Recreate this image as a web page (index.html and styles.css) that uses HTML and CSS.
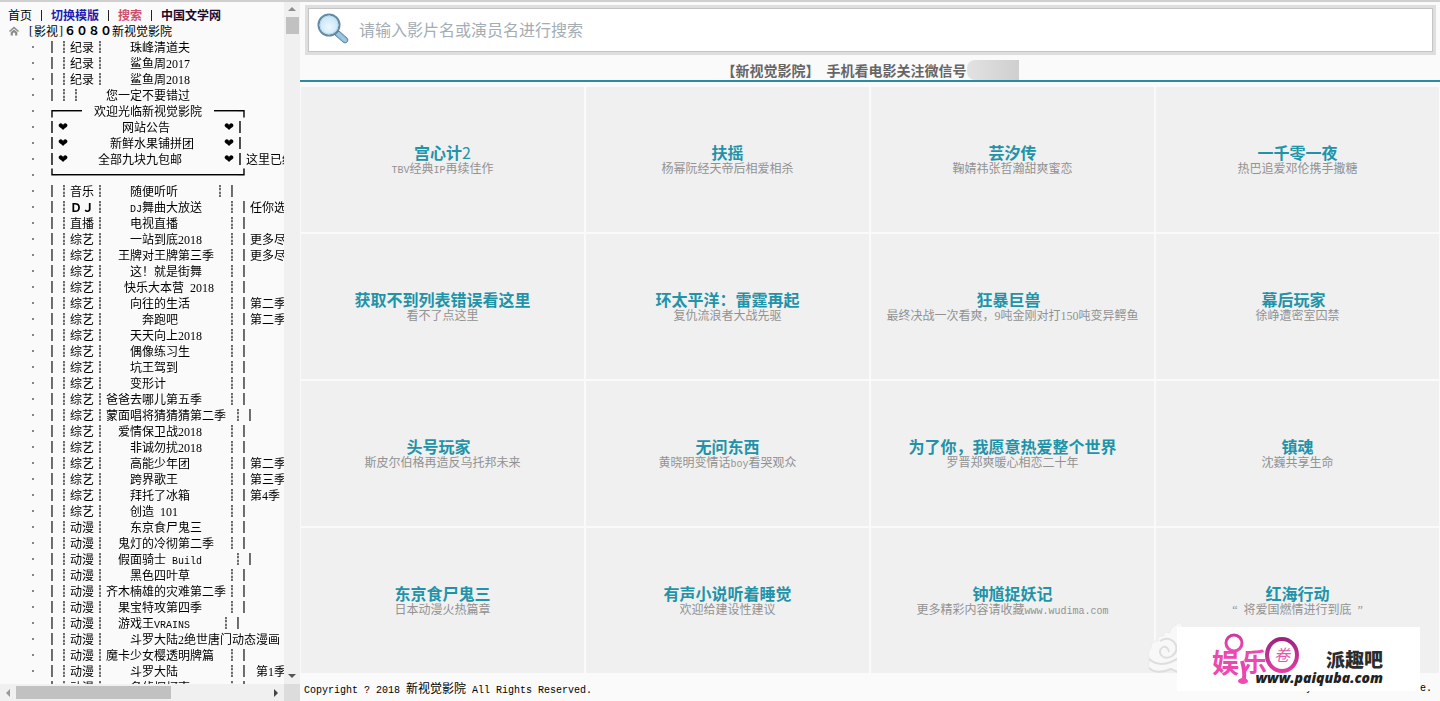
FILE: index.html
```html
<!DOCTYPE html>
<html lang="zh-CN">
<head>
<meta charset="utf-8">
<title>新视觉影院</title>
<link rel="stylesheet" href="styles.css">
</head>
<body>
<aside class="sidebar">
  <div class="pane">
    <nav class="topnav"><a class="home" href="#">首页</a><span class="sep"></span><a class="switch" href="#">切换模版</a><span class="sep"></span><a class="find" href="#">搜索</a><span class="sep"></span><a class="lit" href="#">中国文学网</a></nav>
    <a class="root" href="#"><svg class="house" viewBox="0 0 10 10" width="10" height="10"><path d="M5 .5 0 5l1 .9L5 2.400l4 3.500 1-.9zM5 3.400 1.700 6.300V9.500h2.200V6.700h2.200v2.800h2.200V6.300z"/></svg><span class="bracket">[</span>影视<span class="bracket">]</span><b>６０８０</b>新视觉影院</a>
    <ul class="tree">
      <li><a href="#"><i>│┊</i>纪录<i>┊</i>　　珠峰清道夫</a></li>
      <li><a href="#"><i>│┊</i>纪录<i>┊</i>　　鲨鱼周<span class="n">2017</span></a></li>
      <li><a href="#"><i>│┊</i>纪录<i>┊</i>　　鲨鱼周<span class="n">2018</span></a></li>
      <li><a href="#"><i>│┊┊</i>　　您一定不要错过</a></li>
      <li><a href="#">┏━━　欢迎光临新视觉影院　━━┓</a></li>
      <li><a href="#">┃<span class="heart">❤</span>　　　　网站公告　　　　<span class="heart">❤</span>┃</a></li>
      <li><a href="#">┃<span class="heart">❤</span>　　　新鲜水果铺拼团　　<span class="heart">❤</span>┃</a></li>
      <li><a href="#">┃<span class="heart">❤</span>　　全部九块九包邮　　　<span class="heart">❤</span>┃这里已经</a></li>
      <li><a href="#">┗━━━━━━━━━━━━━━━┛</a></li>
      <li><a href="#"><i>│┊</i>音乐<i>┊</i>　　随便听听　　　<i>┊│</i></a></li>
      <li><a href="#"><i>│┊</i><b>ＤＪ</b><i>┊</i>　　<span class="m">DJ</span>舞曲大放送　　<i>┊│</i>任你选</a></li>
      <li><a href="#"><i>│┊</i>直播<i>┊</i>　　电视直播　　　　<i>┊│</i></a></li>
      <li><a href="#"><i>│┊</i>综艺<i>┊</i>　　一站到底<span class="n">2018</span>　　<i>┊│</i>更多尽</a></li>
      <li><a href="#"><i>│┊</i>综艺<i>┊</i>　王牌对王牌第三季　<i>┊│</i>更多尽</a></li>
      <li><a href="#"><i>│┊</i>综艺<i>┊</i>　　这！就是街舞　　<i>┊│</i></a></li>
      <li><a href="#"><i>│┊</i>综艺<i>┊</i>　&#8194;快乐大本营&#8194;<span class="n">2018</span>　<i>┊│</i></a></li>
      <li><a href="#"><i>│┊</i>综艺<i>┊</i>　　向往的生活　　　<i>┊│</i>第二季</a></li>
      <li><a href="#"><i>│┊</i>综艺<i>┊</i>　　　奔跑吧　　　　<i>┊│</i>第二季</a></li>
      <li><a href="#"><i>│┊</i>综艺<i>┊</i>　　天天向上<span class="n">2018</span>　　<i>┊│</i></a></li>
      <li><a href="#"><i>│┊</i>综艺<i>┊</i>　　偶像练习生　　　<i>┊│</i></a></li>
      <li><a href="#"><i>│┊</i>综艺<i>┊</i>　　坑王驾到　　　　<i>┊│</i></a></li>
      <li><a href="#"><i>│┊</i>综艺<i>┊</i>　　变形计　　　　　<i>┊│</i></a></li>
      <li><a href="#"><i>│┊</i>综艺<i>┊</i>爸爸去哪儿第五季　　<i>┊│</i></a></li>
      <li><a href="#"><i>│┊</i>综艺<i>┊</i>蒙面唱将猜猜猜第二季&#8194;<i>┊│</i></a></li>
      <li><a href="#"><i>│┊</i>综艺<i>┊</i>　爱情保卫战<span class="n">2018</span>　　<i>┊│</i></a></li>
      <li><a href="#"><i>│┊</i>综艺<i>┊</i>　　非诚勿扰<span class="n">2018</span>　　<i>┊│</i></a></li>
      <li><a href="#"><i>│┊</i>综艺<i>┊</i>　　高能少年团　　　<i>┊│</i>第二季</a></li>
      <li><a href="#"><i>│┊</i>综艺<i>┊</i>　　跨界歌王　　　　<i>┊│</i>第三季</a></li>
      <li><a href="#"><i>│┊</i>综艺<i>┊</i>　　拜托了冰箱　　　<i>┊│</i>第<span class="n">4</span>季</a></li>
      <li><a href="#"><i>│┊</i>综艺<i>┊</i>　　创造&#8194;<span class="n">101</span>　　　　<i>┊│</i></a></li>
      <li><a href="#"><i>│┊</i>动漫<i>┊</i>　　东京食尸鬼三　　<i>┊│</i></a></li>
      <li><a href="#"><i>│┊</i>动漫<i>┊</i>　鬼灯的冷彻第二季　<i>┊│</i></a></li>
      <li><a href="#"><i>│┊</i>动漫<i>┊</i>　假面骑士&#8194;<span class="m">Build</span>　　&#8194;<i>┊│</i></a></li>
      <li><a href="#"><i>│┊</i>动漫<i>┊</i>　　黑色四叶草　　　<i>┊│</i></a></li>
      <li><a href="#"><i>│┊</i>动漫<i>┊</i>齐木楠雄的灾难第二季<i>┊│</i></a></li>
      <li><a href="#"><i>│┊</i>动漫<i>┊</i>　果宝特攻第四季　　<i>┊│</i></a></li>
      <li><a href="#"><i>│┊</i>动漫<i>┊</i>　游戏王<span class="m">VRAINS</span>　　&#8194;<i>┊│</i></a></li>
      <li><a href="#"><i>│┊</i>动漫<i>┊</i>　　斗罗大陆<span class="n">2</span>绝世唐门动态漫画</a></li>
      <li><a href="#"><i>│┊</i>动漫<i>┊</i>魔卡少女樱透明牌篇　<i>┊│</i></a></li>
      <li><a href="#"><i>│┊</i>动漫<i>┊</i>　　斗罗大陆　　　　<i>┊│</i>&#8194;第<span class="n">1</span>季</a></li>
      <li><a href="#"><i>│┊</i>动漫<i>┊</i>　　名侦探柯南　　　<i>┊│</i></a></li>
    </ul>
  </div>
  <div class="vbar"><span class="arrow up"></span><span class="vthumb"></span><span class="arrow down"></span></div>
  <div class="hbar"><span class="arrow left"></span><span class="hthumb"></span><span class="arrow right"></span></div>
  <div class="corner"></div>
</aside>
<main class="main">
  <form class="search">
    <label class="field">
      <svg viewBox="0 0 32 32" width="32" height="32" aria-hidden="true">
        <defs>
          <radialGradient id="glass" cx=".5" cy=".6" r=".6"><stop offset="0" stop-color="#edf8fe"/><stop offset="1" stop-color="#c3e2f4"/></radialGradient>
          <linearGradient id="handle" x1="0" y1="1" x2="1" y2="0"><stop offset="0" stop-color="#4d7fa3"/><stop offset=".5" stop-color="#a3cce6"/><stop offset="1" stop-color="#4f7f9f"/></linearGradient>
        </defs>
        <path d="M18 22 22 18 30 25Q32 27 30 29 28 31 26 29z" fill="url(#handle)" stroke="#5886a5"/>
        <circle cx="12" cy="12" r="10.500" fill="url(#glass)" stroke="#6289a6" stroke-width="2"/>
        <circle cx="12" cy="12" r="9" fill="none" stroke="#b9d6e8"/>
      </svg>
      <input type="text" aria-label="搜索" placeholder="请输入影片名或演员名进行搜索">
    </label>
  </form>
  <h1 class="notice"><span>【新视觉影院】</span><span>手机看电影关注微信号</span><span class="mask"></span></h1>
  <section class="grid">
    <a class="cell" href="#"><strong>宫心计<span class="d">2</span></strong><small><span class="m">TBV</span>经典<span class="m">IP</span>再续佳作</small></a>
    <a class="cell" href="#"><strong>扶摇</strong><small>杨幂阮经天帝后相爱相杀</small></a>
    <a class="cell" href="#"><strong>芸汐传</strong><small>鞠婧祎张哲瀚甜爽蜜恋</small></a>
    <a class="cell" href="#"><strong>一千零一夜</strong><small>热巴追爱邓伦携手撒糖</small></a>
    <a class="cell" href="#"><strong>获取不到列表错误看这里</strong><small>看不了点这里</small></a>
    <a class="cell" href="#"><strong>环太平洋：雷霆再起</strong><small>复仇流浪者大战先驱</small></a>
    <a class="cell" href="#"><strong>狂暴巨兽&#8194;</strong><small>最终决战一次看爽，<span class="n">9</span>吨金刚对打<span class="n">150</span>吨变异鳄鱼</small></a>
    <a class="cell" href="#"><strong>幕后玩家&#8194;</strong><small>徐峥遭密室囚禁</small></a>
    <a class="cell" href="#"><strong>头号玩家&#8194;</strong><small>斯皮尔伯格再造反乌托邦未来</small></a>
    <a class="cell" href="#"><strong>无问东西</strong><small>黄晓明变情话<span class="m">boy</span>看哭观众</small></a>
    <a class="cell" href="#"><strong>为了你，我愿意热爱整个世界</strong><small>罗晋郑爽暖心相恋二十年</small></a>
    <a class="cell" href="#"><strong>镇魂</strong><small>沈巍共享生命</small></a>
    <a class="cell" href="#"><strong>东京食尸鬼三</strong><small>日本动漫火热篇章</small></a>
    <a class="cell" href="#"><strong>有声小说听着睡觉</strong><small>欢迎给建设性建议</small></a>
    <a class="cell" href="#"><strong>钟馗捉妖记</strong><small>更多精彩内容请收藏<span class="m">www.wudima.com</span></small></a>
    <a class="cell" href="#"><strong>红海行动</strong><small><span class="n">“</span>&#8194;将爱国燃情进行到底&#8194;<span class="n">”</span></small></a>
  </section>
  <footer class="footer"><span><span class="m">Copyright ? 2018 </span>新视觉影院<span class="m"> All Rights Reserved.</span></span><span class="m">Powered by New Vision Theatre.</span></footer>
</main>
<div class="badge">
  <svg class="cloud" viewBox="0 0 40 56" width="40" height="56" aria-hidden="true">
    <path d="M34 1Q22 8 24 12 17 9 18 15 10 14 12 20 4 20 5 27 0 32 4 38 0 46 6 50 14 54 24 48L40 54V10z" fill="#f8f8f8" stroke="#ececec"/>
    <path d="M23 31Q22 25 17 26 12 29 15 34 19 39 26 35 34 29 28 21 22 15 14 20M3 38Q12 46 25 41L33 37M3 47Q11 54 25 48L34 52" fill="none" stroke="#dedede" stroke-width="2"/>
  </svg>
  <div class="card">
    <svg viewBox="0 0 100 60" width="100" height="60" aria-hidden="true">
      <defs><linearGradient id="pink" x1="0" y1="0" x2="0" y2="1"><stop offset="0" stop-color="#c93aa0"/><stop offset="1" stop-color="#f04bb5"/></linearGradient>
      <linearGradient id="ring" x1="0" y1="0" x2="0" y2="1"><stop offset="0" stop-color="#9c247f"/><stop offset="1" stop-color="#e23ca5"/></linearGradient></defs>
      <circle cx="27" cy="10" r="8" fill="none" stroke="url(#pink)" stroke-width="3"/>
      <path d="M35 28Q38 38 37 46" fill="none" stroke="#ea45ae" stroke-width="4"/>
      <ellipse cx="36" cy="48" rx="5" ry="3" fill="#ef4bb3"/>
      <text class="pinktext" x="5" y="40" font-size="27">娱</text>
      <text class="pinktext" x="35" y="38" font-size="25">乐</text>
      <ellipse cx="75" cy="22" rx="15" ry="16" fill="#fff" stroke="url(#ring)" stroke-width="4"/>
      <text class="juan" x="67" y="28" font-size="16">卷</text>
    </svg>
    <span class="brand">派趣吧</span>
    <span class="url">www.paiquba.com</span>
  </div>
</div>
</body>
</html>
```
FILE: styles.css
```css
* { box-sizing: border-box; }
body {
  margin: 0;
  height: 100vh;
  display: flex;
  position: relative;
  overflow: hidden;
  border-top: 2px solid #cfcfcf;
  background: #fafafa;
  color: #000;
  font-family: "Noto Sans CJK SC", sans-serif;
  font-size: 12px;
  line-height: 16px;
}
a { color: inherit; text-decoration: none; }
.n { font-family: "Liberation Serif", serif; }
.m {
  font-family: "Liberation Mono", monospace;
  font-size: 10px;
  line-height: 10px;
  white-space: pre;
}

.sidebar {
  flex: none;
  width: 300px;
  display: grid;
  grid-template-columns: 1fr 16px;
  grid-template-rows: minmax(0, 1fr) 17px;
}
.pane { overflow: hidden; padding-top: 5px; }
.topnav { display: flex; padding-left: 8px; height: 16px; }
.sep { width: 1px; height: 11px; margin: 3px 9px; background: #222; }
.switch { color: #1c1cb4; font-weight: bold; }
.find { color: #cc4f70; font-weight: bold; }
.lit { color: #1c0a2c; font-weight: bold; }
.root { display: flex; height: 16px; padding-left: 9px; white-space: pre; }
.root b, .tree b { font-family: "Liberation Serif", "Noto Sans CJK SC", serif; }
.bracket { width: 6px; font-family: "Liberation Serif", serif; text-align: center; }
.house { margin: 3px 9px 0 0; fill: #8c8c8c; }
.tree { list-style: none; margin: 0; padding: 0; will-change: transform; }
.tree li {
  height: 16px;
  display: flex;
  align-items: center;
  white-space: pre;
}
.tree li::before {
  content: "";
  flex: none;
  width: 2px;
  height: 2px;
  margin: 0 12px 0 32px;
  background: #858585;
}
.tree a { height: 16px; }
.tree i {
  font-style: normal;
  text-shadow: 0 0 0 #000, 0 0 0 #000;
}
.heart {
  display: inline-block;
  width: 16px;
  height: 16px;
  vertical-align: top;
  font-family: "DejaVu Sans", sans-serif;
}
.heart + .heart { text-align: right; }

.vbar, .hbar { display: flex; align-items: center; background: #f0f0f0; }
.vbar { flex-direction: column; padding: 5px 0 6px; }
.vthumb { width: 13px; height: 17px; margin: 6px 0 auto; background: #c1c1c1; }
.hbar { padding: 0 6px; }
.hthumb { width: 155px; height: 13px; margin: 0 auto 0 6px; background: #c1c1c1; }
.corner { background: #dcdcdc; }
.arrow { border: 4px solid transparent; }
.up { border-top: 0; border-bottom-color: #8e8e8e; }
.down { border-bottom: 0; border-top-color: #555; }
.left { border-left: 0; border-right-color: #999; }
.right { border-right: 0; border-left-color: #444; }

.main { flex: 1; min-width: 0; display: flex; flex-direction: column; }
.search { padding: 3px 4px 0 5px; }
.field {
  display: flex;
  align-items: center;
  gap: 10px;
  height: 44px;
  padding: 0 0 2px 8px;
  margin: 3px;
  background: #fff;
  border: 1px solid #c4c4c4;
  outline: 3px solid #dedede;
}
.field input {
  flex: 1;
  min-width: 0;
  padding: 0;
  border: 0;
  outline: 0;
  background: transparent;
  font: 16px/24px "Noto Sans CJK SC", sans-serif;
}
.field input::placeholder { color: #a3adb3; opacity: 1; }
.notice {
  display: flex;
  justify-content: center;
  align-items: center;
  gap: 7px;
  height: 27px;
  margin: 0;
  padding-top: 5px;
  border-bottom: 2px solid #2d8b9f;
  color: #666;
  font-size: 14px;
  line-height: 20px;
}
.mask {
  width: 52px;
  height: 20px;
  margin-left: -7px;
  border-radius: 8px 0 0 8px;
  background: linear-gradient(90deg, #e2e2e2, #cfcfcf);
}
.grid {
  flex: 1;
  display: grid;
  grid-template-columns: repeat(4, 1fr);
  grid-template-rows: repeat(4, 1fr);
  gap: 2px;
  padding: 5px 1px 0;
}
.cell {
  display: flex;
  flex-direction: column;
  align-items: center;
  justify-content: center;
  background: #f0f0f0;
  text-align: center;
}
.cell strong { height: 16px; color: #1f93a8; font-size: 16px; line-height: 16px; }
.cell .d { font-weight: normal; }
.cell small { height: 16px; color: #929292; font-size: 12px; }
.cell .n { line-height: 12px; }
.footer {
  display: flex;
  justify-content: space-between;
  height: 28px;
  padding: 7px 8px 0 4px;
}
.footer > .m { line-height: 18px; }

.badge {
  position: absolute;
  right: 20px;
  bottom: 10px;
}
.cloud { position: absolute; right: 234px; bottom: 14px; }
.card {
  position: relative;
  width: 243px;
  height: 64px;
  padding: 6px 0 0 30px;
  background: #fff;
}
.pinktext { fill: #ec48b0; font-family: "Noto Sans CJK SC", sans-serif; font-weight: bold; }
.juan { fill: #e05aac; font-family: "Noto Sans CJK SC", sans-serif; font-style: italic; }
.brand {
  position: absolute;
  right: 37px;
  top: 20px;
  color: #2c2c2c;
  font-size: 19px;
  line-height: 24px;
  font-weight: 900;
}
.url {
  position: absolute;
  right: 37px;
  top: 43px;
  color: #222;
  font: italic 800 14px/16px "Open Sans", "DejaVu Sans", sans-serif;
}
```
